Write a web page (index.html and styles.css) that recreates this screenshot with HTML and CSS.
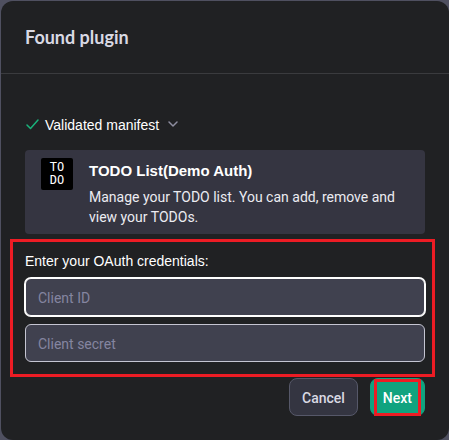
FILE: index.html
```html
<!DOCTYPE html>
<html lang="en">
<head>
<meta charset="utf-8">
<meta name="viewport" content="width=device-width, initial-scale=1">
<title>Found plugin</title>
<link rel="stylesheet" href="styles.css">
</head>
<body>
<main class="dialog" role="dialog" aria-labelledby="title">
  <header class="dialog-header">
    <h1 id="title">Found plugin</h1>
  </header>
  <form class="dialog-body">
    <button type="button" class="status">
      <svg class="check" width="14" height="14" viewBox="0 0 14 14" aria-hidden="true"><path d="M2 7 5.500 10.500 13 2"/></svg>
      <span>Validated manifest</span>
      <svg class="chevron" width="14" height="12" viewBox="0 0 14 12" aria-hidden="true"><path d="M4 3 8 7 12 3"/></svg>
    </button>
    <section class="plugin">
      <div class="logo" aria-hidden="true"><span>TO</span><span>DO</span></div>
      <div class="plugin-text">
        <h2>TODO List(Demo Auth)</h2>
        <p>Manage your TODO list. You can add, remove and view your TODOs.</p>
      </div>
    </section>
    <div class="credentials" role="group" aria-labelledby="credentials-label">
      <p id="credentials-label" class="group-label">Enter your OAuth credentials:</p>
      <input class="field field-active" type="text" placeholder="Client ID" aria-label="Client ID">
      <input class="field" type="text" placeholder="Client secret" aria-label="Client secret">
    </div>
    <div class="actions">
      <button type="button" class="btn btn-neutral">Cancel</button>
      <button type="submit" class="btn btn-primary">Next</button>
    </div>
  </form>
</main>
</body>
</html>
```
FILE: styles.css
```css
* {
  box-sizing: border-box;
}

body {
  margin: 0;
  padding: 1px 0 0 1px;
  background: #4f5060;
  color: #ececf1;
  font: 14px/20px Roboto, "Liberation Sans", sans-serif;
}

h1, h2, p {
  margin: 0;
}

button, input {
  font: inherit;
}

.dialog {
  border-radius: 12px;
  background: #202123;
}

.dialog-header {
  padding: 24px;
  border-bottom: 1px solid #3a3b3e;
}

h1 {
  color: #d9d9e3;
  font: bold 18px/24px Lato, sans-serif;
}

.dialog-body {
  padding: 41px 24px 24px;
}

.status {
  display: flex;
  align-items: center;
  gap: 6px;
  margin-bottom: 15px;
  padding: 0;
  border: 0;
  background: none;
  color: #fff;
  font-family: "Liberation Sans", Arial, sans-serif;
}

.status svg {
  fill: none;
  stroke-linecap: round;
  stroke-linejoin: round;
}

.check {
  stroke: #19b37b;
  stroke-width: 1.5;
}

.chevron {
  stroke: #8e8ea0;
  stroke-width: 1.5;
}

.plugin {
  display: flex;
  gap: 16px;
  padding: 8px 16px 7px;
  border-radius: 4px;
  background: #353541;
}

.logo {
  display: flex;
  flex: none;
  flex-direction: column;
  justify-content: center;
  width: 32px;
  height: 32px;
  border-radius: 2px;
  background: #000;
  color: #fff;
  font: 12px/13px "DejaVu Sans Mono", monospace;
  text-align: center;
}

.plugin-text {
  display: grid;
  gap: 3px;
}

h2 {
  color: #fff;
  font: bold 15px/26px "Liberation Sans", sans-serif;
}

.credentials {
  position: relative;
  display: grid;
  gap: 8px;
  margin: 16px 0;
}

.credentials::after {
  position: absolute;
  inset: -11px -10px -15px -15px;
  border: 3px solid #ed1c24;
  content: "";
  pointer-events: none;
}

.group-label {
  padding-top: 2px;
  color: #fff;
  font-family: "Liberation Sans", Arial, sans-serif;
  line-height: 18px;
}

.field {
  width: 100%;
  height: 38px;
  padding: 2px 12px 0;
  border: 1px solid #c5c5d2;
  border-radius: 6px;
  outline: 0;
  background: #40414f;
  color: #fff;
}

.field-active {
  border-color: #fff;
  box-shadow: 0 0 0 1px #fff;
}

.field::placeholder {
  color: #8585a0;
}

.actions {
  display: flex;
  justify-content: flex-end;
  gap: 12px;
}

.btn {
  position: relative;
  padding: 9px 12px 7px;
  border: 1px solid #565869;
  border-radius: 8px;
  font-weight: 500;
}

.btn-neutral {
  background: #343541;
  color: #d9d9e3;
}

.btn-primary {
  border-color: #10a37f;
  background: #10a37f;
  color: #fff;
}

.btn-primary::after {
  position: absolute;
  inset: 0 3px -1px;
  border: 3px solid #ed1c24;
  content: "";
  pointer-events: none;
}
```
